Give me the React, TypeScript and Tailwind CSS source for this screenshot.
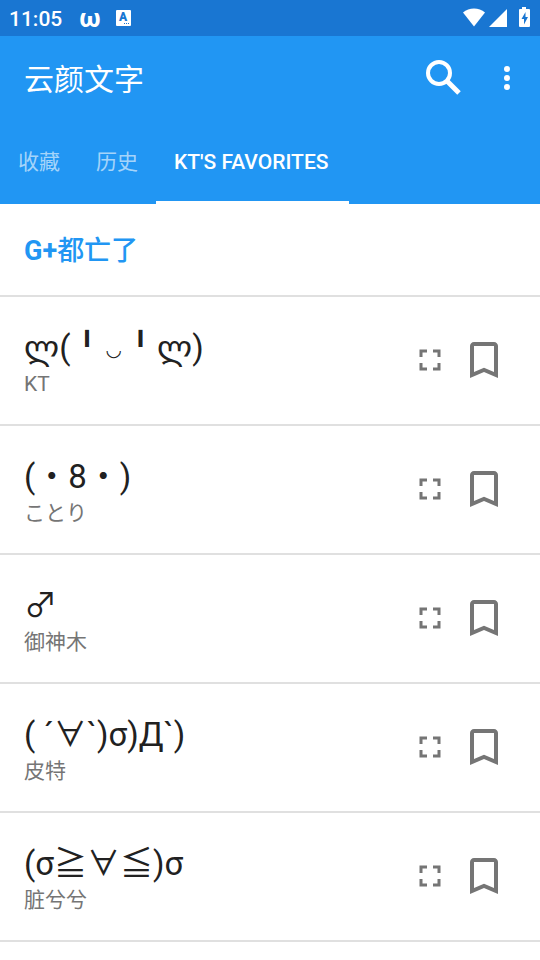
import React from "react";

type Kaomoji = { face: React.ReactNode; name: string; lang: string };

const items: Kaomoji[] = [
  {
    face: (
      <>
        ლ(╹<span className="mx-[2px] align-middle text-[19px] leading-none">◡</span>╹ლ)
      </>
    ),
    name: "KT",
    lang: "ja",
  },
  { face: "(・8・)", name: "ことり", lang: "ja" },
  { face: "♂", name: "御神木", lang: "zh-CN" },
  { face: "( ´∀`)σ)Д`)", name: "皮特", lang: "zh-CN" },
  { face: "(σ≧∀≦)σ", name: "脏兮兮", lang: "zh-CN" },
];

const tabs = ["收藏", "历史", "KT'S FAVORITES"];

function StatusBar() {
  return (
    <div className="flex h-9 items-center bg-[#1976d2] pr-[9px] pl-[9px] text-white">
      <span className="pt-[2px] text-[21px] leading-8 font-medium">11:05</span>
      <span className="ml-[17px] text-[26px] leading-7 font-bold">ω</span>
      <span className="relative ml-[15px] flex h-4 w-[15px] justify-center rounded-[1px] bg-white text-[12px] leading-[15px] font-black text-[#1976d2]">
        A
        <svg className="absolute right-0 bottom-[1px]" width="8" height="2" viewBox="0 0 8 2" fill="#1976d2" aria-hidden="true">
          <path d="M1 0h1v1H1zM3 0h1v1H3zM5 0h1v1H5z" />
        </svg>
      </span>
      <svg className="ml-auto" width="24" height="20" viewBox="0 0 24 20" fill="#fff" aria-hidden="true">
        <path d="M12 18.500L1 4.500C4 2 8 .5 12 .5s8 1.500 11 4z" />
      </svg>
      <svg className="ml-[2px]" width="20" height="20" viewBox="0 0 20 20" fill="#fff" aria-hidden="true">
        <path d="M1 19L19 1v18z" />
      </svg>
      <svg className="ml-[9px]" width="14" height="22" viewBox="0 0 14 22" aria-hidden="true">
        <path fill="#fff" d="M5 0h4v2h3q1 0 1 1v16q0 1-1 1H3q-1 0-1-1V3q0-1 1-1h2z" />
        <path fill="#1976d2" d="M8.500 5L4.500 12h2.500v5.500L11 10H8.500z" />
      </svg>
    </div>
  );
}

function SearchIcon() {
  return (
    <svg width="36" height="36" viewBox="0 0 36 36" fill="none" stroke="#fff" strokeWidth="4" aria-hidden="true">
      <circle cx="14" cy="13" r="11" />
      <path d="M22 21l12 12" strokeWidth="5" />
    </svg>
  );
}

function MoreIcon() {
  return (
    <svg width="36" height="36" viewBox="0 0 24 24" fill="#fff" aria-hidden="true">
      <circle cx="12" cy="6" r="2" />
      <circle cx="12" cy="12" r="2" />
      <circle cx="12" cy="18" r="2" />
    </svg>
  );
}

function FullscreenIcon() {
  return (
    <svg width="36" height="36" viewBox="0 0 24 24" fill="#757575" aria-hidden="true">
      <path d="M7 14H5v5h5v-2H7v-3zm-2-4h2V7h3V5H5v5zm12 7h-3v2h5v-5h-2v3zM14 5v2h3v3h2V5h-5z" />
    </svg>
  );
}

function BookmarkIcon() {
  return (
    <svg width="48" height="48" viewBox="0 0 24 24" fill="#757575" aria-hidden="true">
      <path d="M17 3H7c-1.100 0-2 .9-2 2v16l7-3 7 3V5c0-1.100-.9-2-2-2zm0 15l-5-2.180L7 18V5h10v13z" />
    </svg>
  );
}

export default function App() {
  return (
    <div className="min-h-screen bg-white font-[Roboto,'Noto_Sans_CJK_SC',sans-serif]">
      <header className="bg-[#2196f3] text-white">
        <StatusBar />
        <div className="flex h-21 items-center pr-[15px] pl-6">
          <h1 className="flex-1 pt-[3px] text-[30px] leading-10">云颜文字</h1>
          <button type="button" aria-label="Search" className="mr-7">
            <SearchIcon />
          </button>
          <button type="button" aria-label="More options">
            <MoreIcon />
          </button>
        </div>
        <nav role="tablist" className="flex h-21">
          {tabs.map((t, i) => (
            <button
              key={t}
              type="button"
              role="tab"
              aria-selected={i === 2}
              className={
                i === 2
                  ? "min-w-[193px] border-b-3 border-white px-[18px] pt-[5px] text-left text-[21px] font-medium whitespace-nowrap"
                  : "border-b-3 border-transparent px-[18px] pt-[5px] text-[21px] text-white/60"
              }
            >
              {t}
            </button>
          ))}
        </nav>
      </header>
      <main>
        <h2 className="border-b-2 border-[#e0e0e0] px-6 pt-[27px] pb-[23px] text-[27px] leading-[41px] font-bold text-[#2196f3]">
          G+<span className="font-medium">都亡了</span>
        </h2>
        <ul>
          {items.map((it) => (
            <li key={it.name} className="flex h-[129px] items-center border-b-2 border-[#e0e0e0] pr-8 pb-[1px] pl-6">
              <div className="min-w-0 flex-1 pt-[7px]">
                <p lang="ja" className="h-10 font-[Roboto,'Noto_Sans_CJK_JP','DejaVu_Sans',sans-serif] text-[33px] leading-10 whitespace-pre text-[#212121]">
                  {it.face}
                </p>
                <p lang={it.lang} className="h-8 font-[Roboto,'Noto_Sans_CJK_SC',sans-serif] text-[21px] leading-8 text-[#757575]">
                  {it.name}
                </p>
              </div>
              <button type="button" aria-label={`Full screen ${it.name}`} className="mr-3">
                <FullscreenIcon />
              </button>
              <button type="button" aria-label={`Bookmark ${it.name}`}>
                <BookmarkIcon />
              </button>
            </li>
          ))}
        </ul>
      </main>
    </div>
  );
}
